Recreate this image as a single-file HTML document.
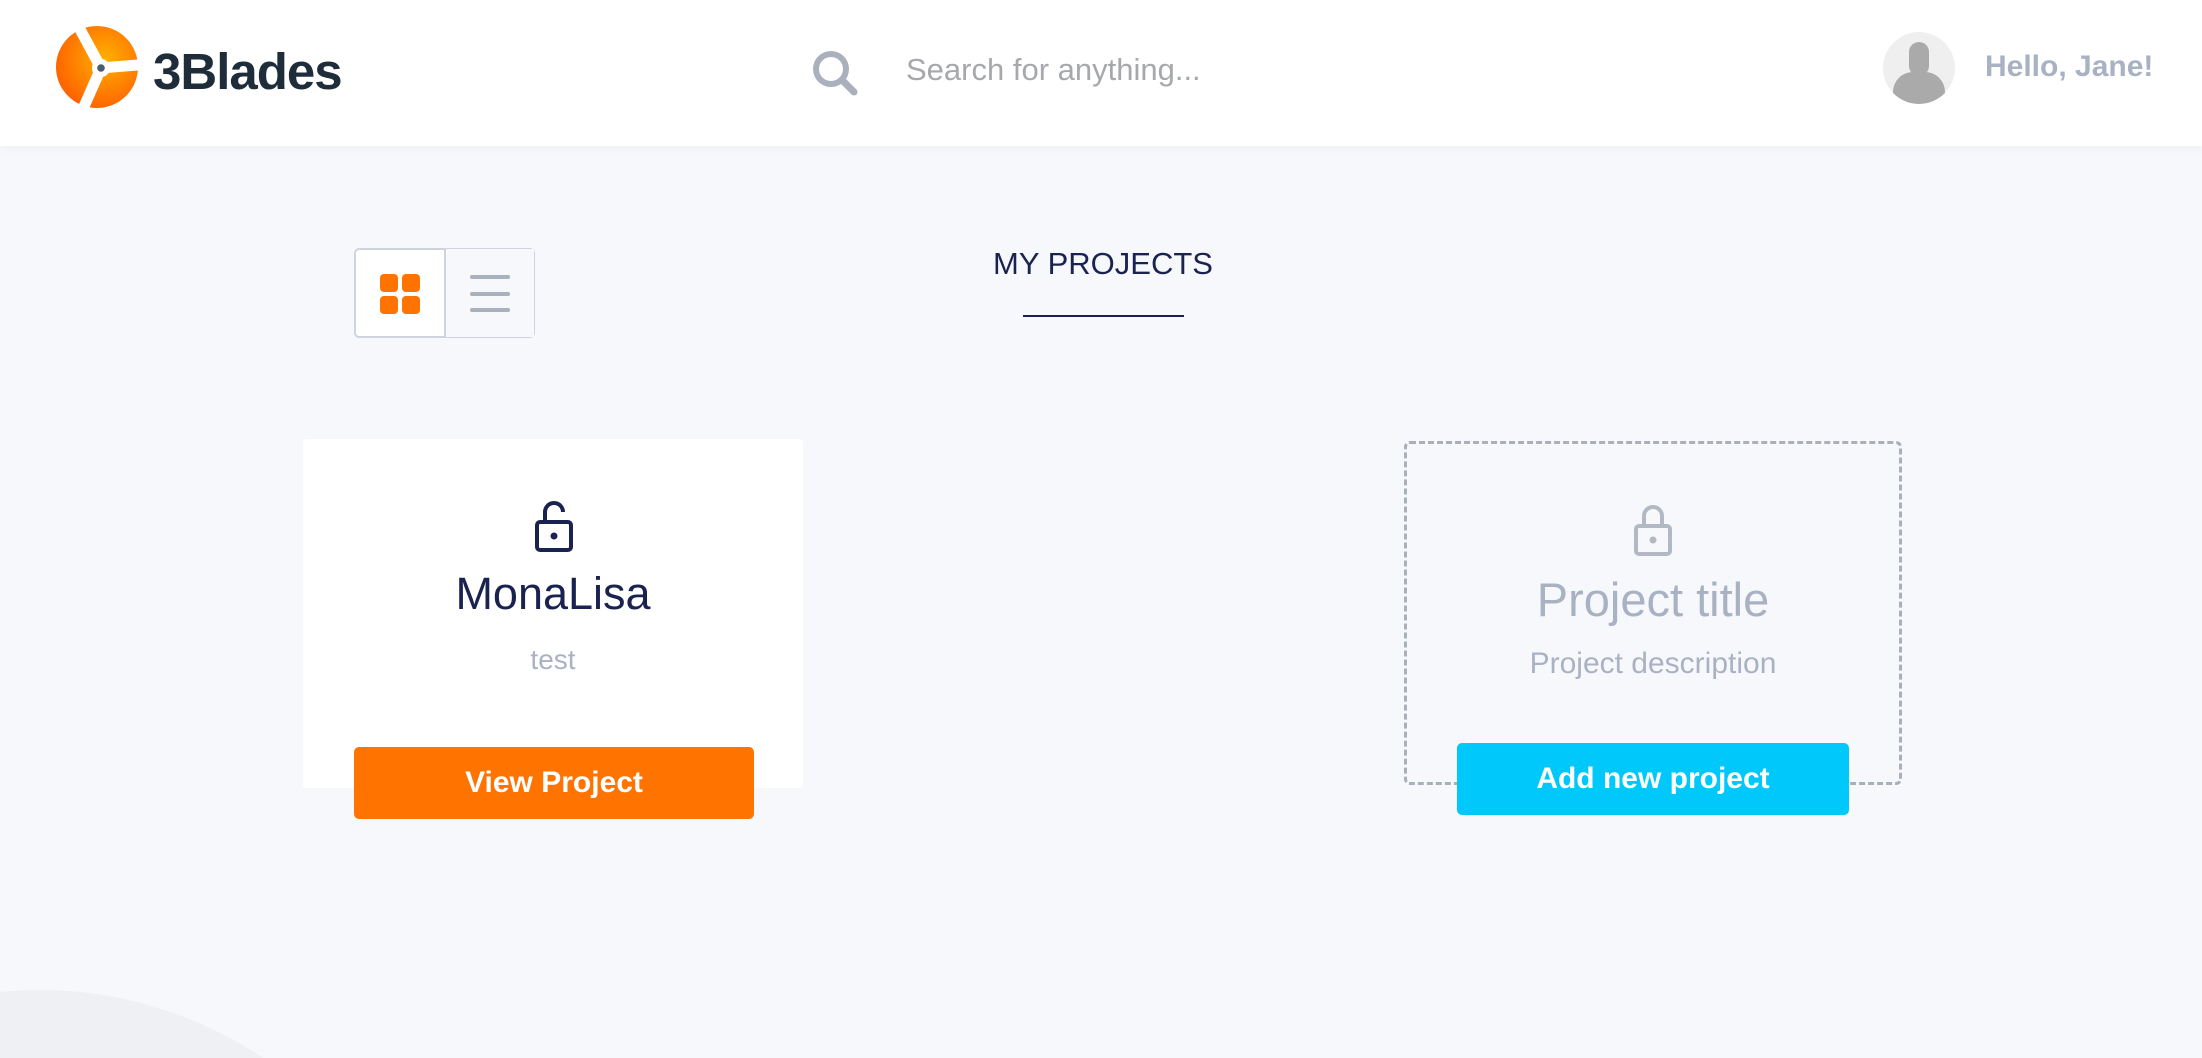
<!DOCTYPE html>
<html><head><meta charset="utf-8"><style>
*{margin:0;padding:0;box-sizing:border-box}
html,body{width:2202px;height:1058px;overflow:hidden}
body{background:#f7f8fb;font-family:"Liberation Sans",sans-serif}
#w{position:relative;width:2202px;height:1058px;overflow:hidden}
.hdr{position:absolute;left:0;top:0;width:2202px;height:146px;background:#fff;box-shadow:0 4px 12px rgba(0,0,0,0.03)}
.abs{position:absolute}
.btn{position:absolute;border-radius:5px;color:#fff;font-weight:bold;font-size:30px;display:flex;align-items:center;justify-content:center}
</style></head><body><div id="w">
<div class="abs" style="left:-360px;top:990px;width:800px;height:800px;border-radius:50%;background:#eef0f4"></div>
<div class="hdr"></div>
<svg class="abs" style="left:45px;top:18px" width="100" height="100" viewBox="0 0 100 100">
<defs><radialGradient id="g" cx="0.6" cy="0.4" r="0.7"><stop offset="0" stop-color="#ffb000"/><stop offset="1" stop-color="#ff5a00"/></radialGradient></defs>
<circle cx="52" cy="49" r="41" fill="url(#g)"/>
<path d="M56 50 L30 2 M56 50 L104 46 M56 50 L34 100" stroke="#fff" stroke-width="11" stroke-linecap="butt"/>
<circle cx="56" cy="50" r="9" fill="#fff"/>
<circle cx="56" cy="50" r="3.8" fill="#4a5d6c"/>
</svg>
<div class="abs" style="left:153px;top:42px;font-size:51px;font-weight:bold;color:#1f2d3a;letter-spacing:-1px">3Blades</div>
<svg class="abs" style="left:810px;top:48px" width="50" height="50" viewBox="0 0 50 50"><circle cx="21" cy="21" r="15" fill="none" stroke="#aab1bd" stroke-width="6"/><path d="M32 32 L44 44" stroke="#aab1bd" stroke-width="7" stroke-linecap="round"/></svg>
<div class="abs" style="left:906px;top:52px;font-size:31px;color:#a6a8ab">Search for anything...</div>
<div class="abs" style="left:1883px;top:32px;width:72px;height:72px;border-radius:50%;background:#efefef;overflow:hidden">
<div class="abs" style="left:26px;top:10px;width:20px;height:34px;border-radius:10px;background:#aaa"></div>
<div class="abs" style="left:10px;top:40px;width:52px;height:40px;border-radius:20px 20px 0 0;background:#aaa"></div></div>
<div class="abs" style="left:1985px;top:50px;font-size:30px;font-weight:bold;color:#a9b2c3">Hello, Jane!</div>
<div class="abs" style="left:354px;top:248px;width:181px;height:90px;border:2px solid #cfd4dc;border-radius:5px;background:#fff"></div>
<div class="abs" style="left:444px;top:249px;width:90px;height:88px;border-left:2px solid #cfd4dc;background:#f7f8fb"></div>
<div class="abs" style="left:380px;top:274px;width:18px;height:18px;border-radius:4px;background:#ff7300"></div>
<div class="abs" style="left:402px;top:274px;width:18px;height:18px;border-radius:4px;background:#ff7300"></div>
<div class="abs" style="left:380px;top:296px;width:18px;height:18px;border-radius:4px;background:#ff7300"></div>
<div class="abs" style="left:402px;top:296px;width:18px;height:18px;border-radius:4px;background:#ff7300"></div>
<div class="abs" style="left:470px;top:275px;width:40px;height:4px;background:#aab1bd;border-radius:2px"></div>
<div class="abs" style="left:470px;top:292px;width:40px;height:4px;background:#aab1bd;border-radius:2px"></div>
<div class="abs" style="left:470px;top:308px;width:40px;height:4px;background:#aab1bd;border-radius:2px"></div>
<div class="abs" style="left:903px;top:246px;width:400px;text-align:center;font-size:31px;color:#1a2350">MY PROJECTS</div>
<div class="abs" style="left:1023px;top:315px;width:161px;height:2px;background:#1a2350"></div>
<div class="abs" style="left:303px;top:439px;width:500px;height:349px;background:#fff;border-radius:3px"></div>
<svg class="abs" style="left:533px;top:498px" width="44" height="56" viewBox="0 0 44 56"><path d="M12 24 V14 A9 9 0 0 1 30 14" fill="none" stroke="#1a2350" stroke-width="4"/><rect x="4" y="24" width="34" height="28" rx="3" fill="none" stroke="#1a2350" stroke-width="4"/><circle cx="21" cy="38" r="3.5" fill="#1a2350"/></svg>
<div class="abs" style="left:303px;top:568px;width:500px;text-align:center;font-size:45px;color:#1a2350">MonaLisa</div>
<div class="abs" style="left:303px;top:644px;width:500px;text-align:center;font-size:28px;color:#a9b2c3">test</div>
<div class="btn" style="left:354px;top:747px;width:400px;height:72px;background:#ff7300">View Project</div>
<div class="abs" style="left:1404px;top:441px;width:498px;height:344px;border:3px dashed #aab0bb;border-radius:6px"></div>
<svg class="abs" style="left:1632px;top:502px" width="44" height="56" viewBox="0 0 44 56"><path d="M12 24 V14 A9 9 0 0 1 30 14 V24" fill="none" stroke="#b3b9c4" stroke-width="4"/><rect x="4" y="24" width="34" height="28" rx="3" fill="none" stroke="#b3b9c4" stroke-width="4"/><circle cx="21" cy="38" r="3.5" fill="#b3b9c4"/></svg>
<div class="abs" style="left:1404px;top:572px;width:498px;text-align:center;font-size:47px;color:#a9b2c3">Project title</div>
<div class="abs" style="left:1404px;top:647px;width:498px;text-align:center;font-size:30px;color:#a9b2c3">Project description</div>
<div class="btn" style="left:1457px;top:743px;width:392px;height:72px;background:#00c8fa">Add new project</div>
</div></body></html>
